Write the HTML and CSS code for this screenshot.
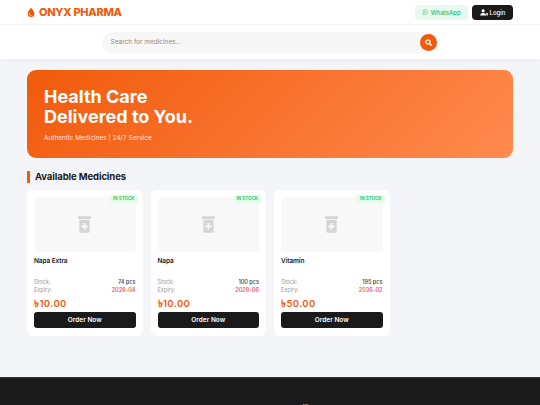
FILE: index.html
```html
<!DOCTYPE html>
<html lang="en">
<head>
    <meta charset="UTF-8">
    <meta name="viewport" content="width=device-width, initial-scale=1.0">
    <title>Onyx Pharma</title>
    <link rel="stylesheet" href="styles.css">
</head>
<body>
    <header class="site-header">
        <div class="top-bar">
            <a class="logo" href="#">
                <svg class="logo-icon" viewBox="0 0 12 14"><path d="M6 0C6 0 1 5.200 1 8.800A5 5 0 0 0 11 8.800C11 5.200 6 0 6 0Z" fill="#f15a0b"/><path d="M3.200 8.600A2.800 2.800 0 0 0 6 11.600" fill="none" stroke="#fff" stroke-width="1" stroke-linecap="round"/></svg>
                ONYX PHARMA
            </a>
            <div class="top-actions">
                <a class="btn-whatsapp" href="#">
                    <svg class="btn-icon" viewBox="0 0 12 12"><path d="M1.200 10.800 1.900 8.300A4.700 4.700 0 1 1 3.700 10.100Z" fill="none" stroke="#25c266" stroke-width="1"/><path d="M4.300 3.700C3.700 4.300 3.800 5.300 4.800 6.400 5.900 7.600 7.100 8 7.800 7.400L8.200 6.800 7 6.100 6.500 6.600C6 6.400 5.400 5.800 5.200 5.200L5.700 4.700 5 3.500Z" fill="#25c266"/></svg>
                    WhatsApp
                </a>
                <a class="btn-login" href="#">
                    <svg class="btn-icon btn-icon-login" viewBox="0 0 13 12"><circle cx="5" cy="3.200" r="2.700" fill="#fff"/><path d="M0 11C0 8.200 2 6.800 5 6.800S10 8.200 10 11Z" fill="#fff"/><path d="M9.600 6.800H13V11H10.800C10.800 9.300 10.400 7.900 9.600 6.800Z" fill="#fff"/></svg>
                    Login
                </a>
            </div>
        </div>
        <div class="search-row">
            <form class="search-box">
                <input class="search-input" type="text" placeholder="Search for medicines...">
                <button class="search-btn" type="button">
                    <svg viewBox="0 0 10 10" width="7" height="7"><circle cx="4.200" cy="4.200" r="3" fill="none" stroke="#fff" stroke-width="1.800"/><path d="M6.500 6.500 9.200 9.200" stroke="#fff" stroke-width="1.800" stroke-linecap="round"/></svg>
                </button>
            </form>
        </div>
    </header>

    <main class="content">
        <section class="hero">
            <h1>Health Care<br>Delivered to You.</h1>
            <p>Authentic Medicines | 24/7 Service</p>
        </section>

        <h2 class="section-title">Available Medicines</h2>

        <div class="product-grid">
            <article class="card">
                <div class="card-image">
                    <span class="badge">IN STOCK</span>
                    <svg class="bottle" viewBox="0 0 14 18"><rect x="0" y="0" width="14" height="3" rx="0.500" fill="#d5d5d5"/><path d="M1.500 4H12.500V16.500A1.500 1.500 0 0 1 11 18H3A1.500 1.500 0 0 1 1.500 16.500Z" fill="#d5d5d5"/><path d="M6 7.500H8V10H10.500V12H8V14.500H6V12H3.500V10H6Z" fill="#f8f8f8"/></svg>
                </div>
                <h3>Napa Extra</h3>
                <div class="meta"><span>Stock:</span><b>74 pcs</b></div>
                <div class="meta"><span>Expiry:</span><b class="expiry">2028-04</b></div>
                <div class="price">৳10.00</div>
                <a class="order-btn" href="#">Order Now</a>
            </article>
            <article class="card">
                <div class="card-image">
                    <span class="badge">IN STOCK</span>
                    <svg class="bottle" viewBox="0 0 14 18"><rect x="0" y="0" width="14" height="3" rx="0.500" fill="#d5d5d5"/><path d="M1.500 4H12.500V16.500A1.500 1.500 0 0 1 11 18H3A1.500 1.500 0 0 1 1.500 16.500Z" fill="#d5d5d5"/><path d="M6 7.500H8V10H10.500V12H8V14.500H6V12H3.500V10H6Z" fill="#f8f8f8"/></svg>
                </div>
                <h3>Napa</h3>
                <div class="meta"><span>Stock:</span><b>100 pcs</b></div>
                <div class="meta"><span>Expiry:</span><b class="expiry">2028-06</b></div>
                <div class="price">৳10.00</div>
                <a class="order-btn" href="#">Order Now</a>
            </article>
            <article class="card">
                <div class="card-image">
                    <span class="badge">IN STOCK</span>
                    <svg class="bottle" viewBox="0 0 14 18"><rect x="0" y="0" width="14" height="3" rx="0.500" fill="#d5d5d5"/><path d="M1.500 4H12.500V16.500A1.500 1.500 0 0 1 11 18H3A1.500 1.500 0 0 1 1.500 16.500Z" fill="#d5d5d5"/><path d="M6 7.500H8V10H10.500V12H8V14.500H6V12H3.500V10H6Z" fill="#f8f8f8"/></svg>
                </div>
                <h3>Vitamin</h3>
                <div class="meta"><span>Stock:</span><b>195 pcs</b></div>
                <div class="meta"><span>Expiry:</span><b class="expiry">2036-02</b></div>
                <div class="price">৳50.00</div>
                <a class="order-btn" href="#">Order Now</a>
            </article>
        </div>
    </main>

    <footer class="site-footer">
        <div class="footer-col">ONYX PHARMA</div>
        <div class="footer-col">Head Office</div>
    </footer>
</body>
</html>
```

FILE: styles.css
```css
html {
    overflow: hidden;
}

body {
    font-family: Inter, "Noto Sans", sans-serif;
    margin: 0;
    background: #f4f5f8;
    color: #1a1a1a;
}

a {
    text-decoration: none;
}

.site-header {
    background: #fff;
    box-shadow: 0 2px 6px rgba(0, 0, 0, 0.03);
}

.top-bar {
    height: 24px;
    padding: 0 27px;
    display: flex;
    align-items: center;
    justify-content: space-between;
    border-bottom: 1px solid #f3f3f3;
}

.logo {
    display: flex;
    align-items: center;
    gap: 4px;
    font-size: 11px;
    font-weight: 800;
    letter-spacing: -0.300px;
    color: #f15a0b;
}

.logo-icon {
    width: 8px;
    height: 11px;
}

.top-actions {
    display: flex;
    align-items: center;
    gap: 4px;
}

.btn-whatsapp,
.btn-login {
    height: 15px;
    display: flex;
    align-items: center;
    justify-content: center;
    gap: 2px;
    border-radius: 4px;
    font-size: 6px;
    font-weight: 500;
}

.btn-whatsapp {
    width: 53px;
    background: #e8f9ef;
    color: #25c266;
}

.btn-login {
    width: 41px;
    background: #1a1a1a;
    color: #fff;
}

.btn-icon {
    width: 6.500px;
    height: 6px;
}

.btn-icon-login {
    width: 8px;
    height: 7px;
}

.search-row {
    height: 34px;
    display: flex;
    align-items: center;
    justify-content: center;
}

.search-box {
    width: 337px;
    height: 21px;
    margin: 0;
    display: flex;
    align-items: center;
    justify-content: space-between;
    box-sizing: border-box;
    padding: 0 2px 0 9px;
    background: #f7f7f7;
    border-radius: 11px;
}

.search-input {
    flex: 1;
    min-width: 0;
    border: none;
    outline: none;
    background: transparent;
    font-family: inherit;
    font-size: 6.500px;
    padding: 0;
}

.search-input::placeholder {
    color: #8a8a8a;
}

.search-btn {
    width: 17px;
    height: 17px;
    border: none;
    border-radius: 50%;
    padding: 0;
    display: flex;
    align-items: center;
    justify-content: center;
    background: #f15a0b;
}

.content {
    padding: 11px 27px 41px;
}

.hero {
    height: 88px;
    box-sizing: border-box;
    padding: 17px;
    border-radius: 9px;
    color: #fff;
    background: linear-gradient(135deg, #f15a0b 0%, #ff8a4f 100%);
}

.hero h1 {
    margin: 0;
    font-size: 18px;
    line-height: 20px;
    font-weight: 700;
}

.hero p {
    margin: 7px 0 0;
    font-size: 6.500px;
    opacity: 0.85;
}

.section-title {
    margin: 13px 0 7px;
    padding-left: 5px;
    border-left: 3px solid #f15a0b;
    font-size: 9.500px;
    line-height: 12px;
    font-weight: 700;
    letter-spacing: -0.100px;
}

.product-grid {
    display: grid;
    grid-template-columns: repeat(4, 1fr);
    gap: 8px;
}

.card {
    background: #fff;
    border-radius: 6px;
    padding: 7px;
    height: 146px;
    box-sizing: border-box;
}

.card-image {
    position: relative;
    height: 55px;
    display: flex;
    align-items: center;
    justify-content: center;
    background: #f8f8f8;
    border-radius: 4px;
}

.badge {
    position: absolute;
    top: -2px;
    right: -2px;
    padding: 0 3px;
    height: 8px;
    line-height: 8px;
    border-radius: 2px;
    background: #e3fbe9;
    color: #25c266;
    font-size: 4.500px;
    font-weight: 600;
}

.bottle {
    width: 13px;
    height: 17px;
}

.card h3 {
    margin: 5px 0 0;
    height: 21px;
    font-size: 6.500px;
    line-height: 9px;
    font-weight: 600;
    letter-spacing: -0.100px;
}

.meta {
    display: flex;
    justify-content: space-between;
    font-size: 5.500px;
    line-height: 8px;
    color: #999;
}

.meta b {
    color: #555;
    font-weight: 600;
}

.meta .expiry {
    color: #e0606a;
}

.price {
    margin-top: 4px;
    font-size: 9.500px;
    line-height: 12px;
    font-weight: 600;
    letter-spacing: 0.400px;
    color: #f15a0b;
}

.order-btn {
    display: block;
    margin-top: 2px;
    height: 16px;
    line-height: 16px;
    text-align: center;
    border-radius: 3px;
    background: #1a1a1a;
    color: #fff;
    font-size: 6.500px;
    font-weight: 600;
}

.site-footer {
    height: 60px;
    box-sizing: border-box;
    padding: 26px 27px 0;
    display: grid;
    grid-template-columns: 253px 1fr;
    background: #1a1a1a;
    border-top: 1px solid #333;
    color: #bbb;
    font-size: 6.200px;
    font-weight: 700;
}
```
